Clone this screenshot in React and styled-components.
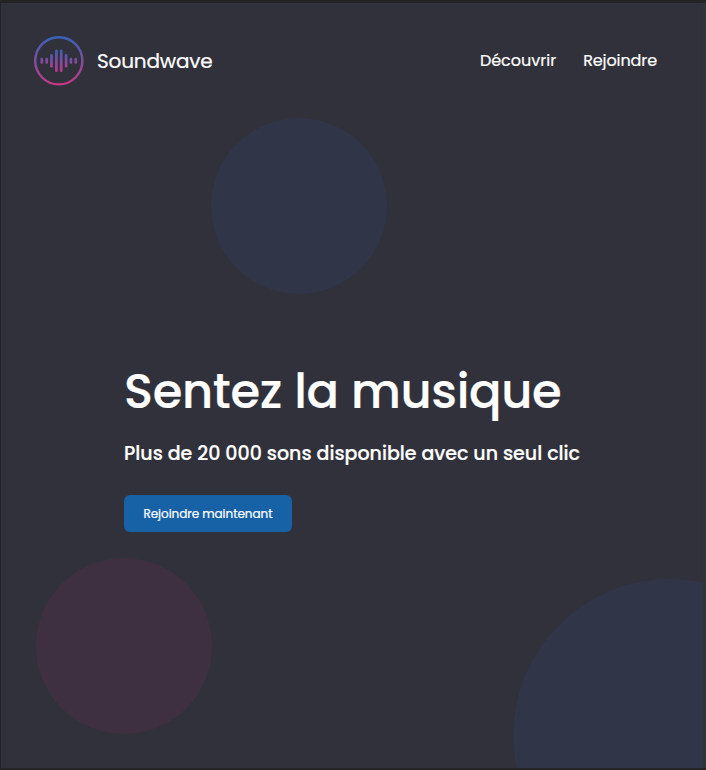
import React from "react";
import styled, { createGlobalStyle } from "styled-components";

const GlobalStyle = createGlobalStyle`
  *, *::before, *::after { box-sizing: border-box; }
  html, body { margin: 0; padding: 0; background: #242426; }
  body {
    color: #fff;
    font-family: Poppins, Inter, "Open Sans", sans-serif;
    -webkit-text-stroke: 0.2px #fff;
  }
`;

const Frame = styled.div`
  width: 100%;
  height: 100vh;
  padding: 3px 0 2px 1px;
  background: #242426;
`;

const Page = styled.div`
  position: relative;
  overflow: hidden;
  height: 100%;
  border-right: 3px solid #343438;
  background: #31313b;
`;

const Bubble = styled.div`
  position: absolute;
  left: ${(p) => p.$x}px;
  top: ${(p) => p.$y}px;
  width: ${(p) => p.$size}px;
  height: ${(p) => p.$size}px;
  border-radius: 50%;
  background: ${(p) => p.$color};
`;

const Header = styled.header`
  position: relative;
  display: flex;
  align-items: center;
  justify-content: space-between;
  height: 116px;
  padding: 0 46px 0 32px;
`;

const Brand = styled.a`
  display: flex;
  align-items: center;
  gap: 12px;
`;

const BrandName = styled.span`
  font-size: 20px;
  line-height: 30px;
  letter-spacing: -0.18px;
`;

const LogoSvg = styled.svg`
  display: block;
  width: 52px;
  height: 52px;
`;

const Nav = styled.nav`
  display: flex;
  gap: 27px;
`;

const NavLink = styled.a`
  font-size: 16px;
  line-height: 24px;
  letter-spacing: ${(p) => p.$spacing}px;
`;

const Hero = styled.main`
  position: relative;
  display: flex;
  flex-direction: column;
  align-items: flex-start;
  padding: 237px 0 0 123px;
`;

const Title = styled.h1`
  margin: 0;
  font-size: 48px;
  font-weight: 500;
  line-height: 72px;
  letter-spacing: -0.31px;
  white-space: nowrap;
`;

const Subtitle = styled.h2`
  margin: 8px 0 0;
  font-size: 19px;
  font-weight: 500;
  line-height: 36px;
  letter-spacing: 0;
  white-space: nowrap;
`;

const JoinButton = styled.button`
  width: 168px;
  height: 37px;
  margin-top: 23px;
  padding: 0;
  border: 0;
  border-radius: 6px;
  background: #1762a7;
  color: #fff;
  font: inherit;
  font-size: 12px;
  line-height: 18px;
  letter-spacing: -0.05px;
  white-space: nowrap;
`;

const bars = [
  [8.8, 6],
  [13.7, 6],
  [18.5, 13.4],
  [23.4, 22.6],
  [28.2, 22.6],
  [33.1, 13.4],
  [37.9, 6],
  [42.8, 6],
];

function Logo() {
  return (
    <LogoSvg viewBox="0 0 52 52" aria-hidden="true">
      <defs>
        <linearGradient id="ring" gradientUnits="userSpaceOnUse" x1="0" y1="1" x2="0" y2="51">
          <stop offset="0" stopColor="#3563b8" />
          <stop offset="1" stopColor="#cc3684" />
        </linearGradient>
        <linearGradient id="wave" gradientUnits="userSpaceOnUse" x1="0" y1="14" x2="0" y2="38">
          <stop offset="0" stopColor="#3563b8" />
          <stop offset="1" stopColor="#c73586" />
        </linearGradient>
      </defs>
      <circle cx="25.8" cy="25.8" r="23.6" fill="none" stroke="url(#ring)" strokeWidth="2.4" />
      {bars.map(([x, h]) => (
        <rect key={x} x={x - 1.35} y={25.8 - h / 2} width="2.7" height={h} rx="1.35" fill="url(#wave)" />
      ))}
    </LogoSvg>
  );
}

export default function App() {
  return (
    <>
      <GlobalStyle />
      <Frame>
        <Page>
          <Bubble $x={210.3} $y={115} $size={176} $color="#303548" />
          <Bubble $x={35} $y={555} $size={176} $color="#3e3041" />
          <Bubble $x={512} $y={576} $size={314} $color="#303548" />
          <Header>
            <Brand>
              <Logo />
              <BrandName>Soundwave</BrandName>
            </Brand>
            <Nav>
              <NavLink $spacing={0}>Découvrir</NavLink>
              <NavLink $spacing={-0.1}>Rejoindre</NavLink>
            </Nav>
          </Header>
          <Hero>
            <Title>Sentez la musique</Title>
            <Subtitle>Plus de 20 000 sons disponible avec un seul clic</Subtitle>
            <JoinButton>Rejoindre maintenant</JoinButton>
          </Hero>
        </Page>
      </Frame>
    </>
  );
}
